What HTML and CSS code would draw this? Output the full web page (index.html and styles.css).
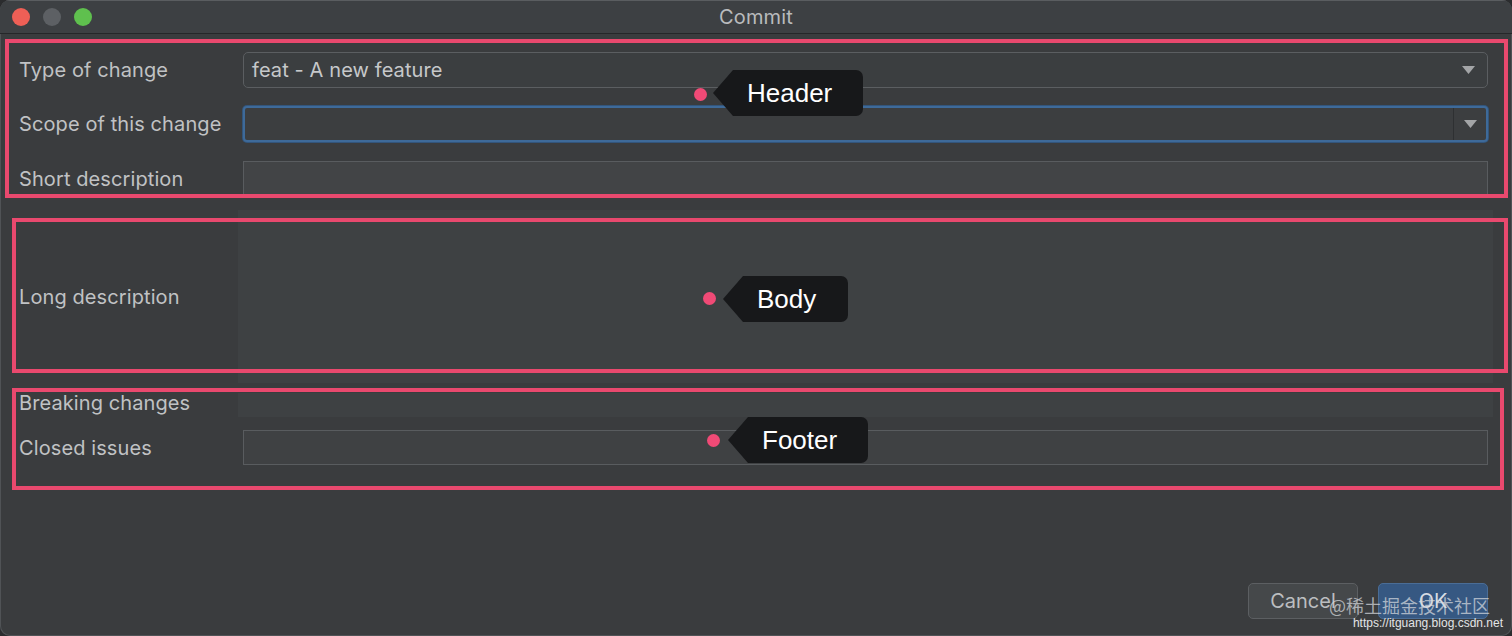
FILE: index.html
```html
<!DOCTYPE html>
<html>
<head>
<meta charset="utf-8">
<title>Commit</title>
<link rel="stylesheet" href="styles.css">
</head>
<body>
<div class="window">
  <div class="titlebar">
    <div class="lights">
      <span class="light red"></span>
      <span class="light gray"></span>
      <span class="light green"></span>
    </div>
    <div class="title">Commit</div>
    <div></div>
  </div>
  <div class="content">
    <div class="form">
      <div class="row r1">
        <div class="label">Type of change</div>
        <div class="field combo">
          <span class="value">feat - A new feature</span>
          <svg class="arrow" width="13" height="8" viewBox="0 0 13 8"><path d="M0 0H13L6.5 8Z" fill="#a3a5a7"/></svg>
        </div>
      </div>
      <div class="row r2">
        <div class="label">Scope of this change</div>
        <div class="field combo focus">
          <span class="value"></span>
          <span class="arrow-box"><svg width="13" height="8" viewBox="0 0 13 8"><path d="M0 0H13L6.5 8Z" fill="#a3a5a7"/></svg></span>
        </div>
      </div>
      <div class="row r3">
        <div class="label">Short description</div>
        <div class="field input input-lighter"></div>
      </div>
      <div class="row r4">
        <div class="label">Long description</div>
        <div class="field area"></div>
      </div>
      <div class="row r5">
        <div class="label">Breaking changes</div>
        <div class="field area"></div>
      </div>
      <div class="row r6">
        <div class="label">Closed issues</div>
        <div class="field input"></div>
      </div>
    </div>
    <div class="buttons">
      <div class="btn cancel">Cancel</div>
      <div class="btn ok">OK</div>
    </div>
  </div>

  <div class="box box-header"></div>
  <div class="box box-body"></div>
  <div class="box box-footer"></div>

  <div class="dot dot-header"></div>
  <div class="callout callout-header">Header</div>
  <div class="dot dot-body"></div>
  <div class="callout callout-body">Body</div>
  <div class="dot dot-footer"></div>
  <div class="callout callout-footer">Footer</div>

  <div class="watermark">
    <div class="wm-cn">@稀土掘金技术社区</div>
    <div class="wm-url">https://itguang.blog.csdn.net</div>
  </div>
</div>
</body>
</html>
```
FILE: styles.css
```css
html, body {
  margin: 0;
  padding: 0;
  background: #2b2c2e;
}

body {
  font-family: Inter, "Liberation Sans", Arial, sans-serif;
}

.window {
  position: relative;
  width: 1512px;
  height: 636px;
  background: #3a3c3e;
  border-radius: 10px;
  overflow: hidden;
  display: flex;
  flex-direction: column;
  box-shadow: inset 0 0 0 1px #505356;
}

.titlebar {
  flex: none;
  background: #3d4043;
  border-bottom: 1px solid #262729;
  border-top: 1px solid #5a5d60;
  box-sizing: border-box;
  height: 34px;
  display: grid;
  grid-template-columns: 1fr auto 1fr;
  align-items: center;
}

.lights {
  display: flex;
  gap: 13px;
  padding-left: 12px;
}

.light {
  width: 18px;
  height: 18px;
  border-radius: 50%;
}

.light.red { background: #ee5f56; }
.light.gray { background: #5d6064; }
.light.green { background: #5fc04e; }

.title {
  color: #b9bbbd;
  font-size: 20px;
  letter-spacing: 0.2px;
}

.content {
  flex: 1;
  display: flex;
  flex-direction: column;
  justify-content: space-between;
  padding: 18px 24px 17px 19px;
}

.form {
  display: flex;
  flex-direction: column;
}

.row {
  display: flex;
  align-items: center;
}

.label {
  width: 224px;
  flex: none;
  color: #c0c2c4;
  font-size: 20px;
  letter-spacing: 0.1px;
}

.field {
  flex: 1;
  box-sizing: border-box;
  height: 100%;
}

.r1 { height: 36px; }
.r2 { height: 36px; margin-top: 18px; }
.r3 { height: 36px; margin-top: 19px; }
.r4 { height: 173px; margin-top: 13px; }
.r5 { height: 24px; margin-top: 10px; }
.r6 { height: 35px; margin-top: 13px; }

.r5 .label { margin-top: -4px; }

.combo {
  display: flex;
  align-items: center;
  justify-content: space-between;
  border: 1px solid #5b5e61;
  border-radius: 5px;
  background: #3b3e40;
  padding-left: 8px;
  padding-right: 12px;
}

.combo .value {
  color: #c6c8ca;
  font-size: 20px;
  letter-spacing: 0.1px;
}

.combo.focus {
  padding-right: 0;
  border: 2px solid #3e6a99;
  box-shadow: 0 0 0 1px #33557b;
  border-radius: 4px;
  background: #3c3e40;
}

.arrow-box {
  width: 33px;
  height: 100%;
  display: flex;
  align-items: center;
  justify-content: center;
  border-left: 1px solid #2e3032;
  box-sizing: border-box;
}

.input {
  border: 1px solid #595c5f;
  background: #3f4143;
}

.input-lighter {
  background: #424446;
}

.area {
  background: #3e4143;
  margin: 0 -5px;
}

.buttons {
  display: flex;
  justify-content: flex-end;
  gap: 20px;
}

.btn {
  width: 110px;
  height: 36px;
  box-sizing: border-box;
  border-radius: 5px;
  display: flex;
  align-items: center;
  justify-content: center;
  font-size: 20px;
}

.btn.cancel {
  background: #45484a;
  border: 1px solid #5c5f62;
  color: #bcbec0;
}

.btn.ok {
  background: #365882;
  border: 1px solid #4a6d96;
  color: #d7dce2;
}

/* annotation overlays */
.box {
  position: absolute;
  border: 4px solid #e9496e;
  box-sizing: border-box;
  pointer-events: none;
}

.box-header { left: 5px; top: 39px; width: 1503px; height: 159px; }
.box-body { left: 12px; top: 218px; width: 1496px; height: 155px; }
.box-footer { left: 12px; top: 388px; width: 1492px; height: 102px; }

.dot {
  position: absolute;
  width: 13px;
  height: 13px;
  border-radius: 50%;
  background: #f04a76;
}

.dot-header { left: 694px; top: 88px; }
.dot-body { left: 703px; top: 292px; }
.dot-footer { left: 707px; top: 434px; }

.callout {
  position: absolute;
  height: 46px;
  background: #17181a;
  color: #ffffff;
  font-family: "Liberation Sans", Arial, sans-serif;
  font-size: 26px;
  line-height: 46px;
  border-radius: 0 7px 7px 0;
  padding-left: 14px;
  box-sizing: border-box;
}

.callout::before {
  content: "";
  position: absolute;
  right: 100%;
  top: 0;
  border-right: 20px solid #17181a;
  border-top: 23px solid transparent;
  border-bottom: 23px solid transparent;
}

.callout-header { left: 733px; top: 70px; width: 130px; }
.callout-body { left: 743px; top: 276px; width: 105px; }
.callout-footer { left: 748px; top: 417px; width: 120px; }

.watermark {
  position: absolute;
  right: 9px;
  bottom: 6px;
  display: flex;
  flex-direction: column;
  align-items: flex-end;
  pointer-events: none;
}

.wm-cn {
  font-family: "Noto Sans CJK SC", sans-serif;
  font-size: 18px;
  line-height: 22px;
  color: rgba(215, 218, 222, 0.72);
  margin-right: 13px;
}

.wm-url {
  font-family: "Liberation Sans", Arial, sans-serif;
  font-size: 12px;
  line-height: 14px;
  color: #e3e5e7;
}
```
